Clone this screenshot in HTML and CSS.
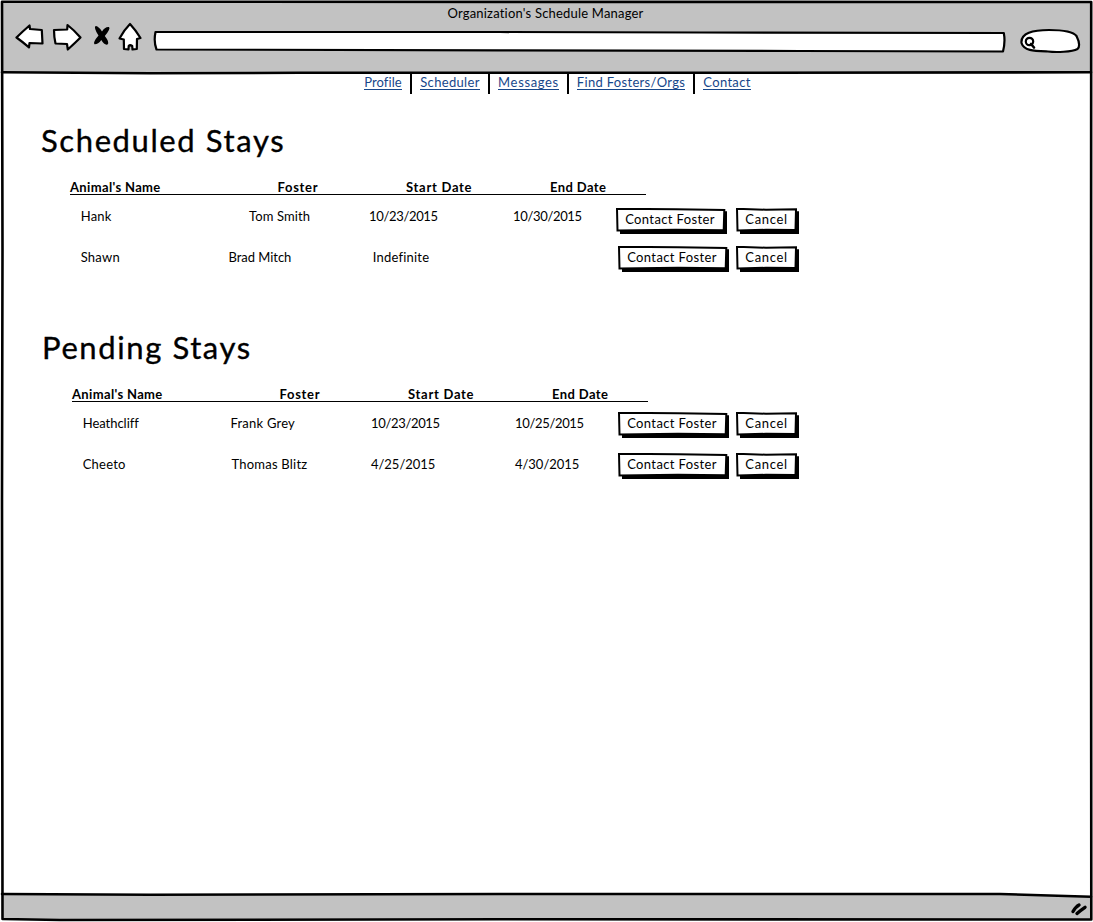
FILE: index.html
```html
<!DOCTYPE html>
<html lang="en">
<head>
<meta charset="utf-8">
<title>Organization's Schedule Manager</title>
<link rel="stylesheet" href="styles.css">
</head>
<body>
<svg width="0" height="0" class="defs" aria-hidden="true">
  <symbol id="btn-wide" viewBox="0 0 111 26">
    <path d="M4 22H108V3.200H111V26H4z"/>
    <path d="M1 .800L60 1.200L108.300 1.900L107.700 22.200L60 21.800L1.500 22.500z" fill="#fff" stroke="#000" stroke-width="2"/>
  </symbol>
  <symbol id="btn-small" viewBox="0 0 63 26">
    <path d="M4 22H60V3.200H63V26H4z"/>
    <path d="M1 .800L30 1.700L60 1.300L59.500 22L30 21.800L1.500 22.500z" fill="#fff" stroke="#000" stroke-width="2"/>
  </symbol>
</svg>
<div class="window">
  <header class="chrome">
    <div class="title">Organization's Schedule Manager</div>
    <div class="toolbar">
      <svg class="i-back" viewBox="15 22 30 32"><path d="M16.500 37.500Q22 32 29.500 25.500L30 29L41.800 30L42.500 43.500L29.500 43L29 47.300Q22 41.500 16.500 37.500z"/></svg>
      <svg class="i-fwd" viewBox="52 22 31 32"><path d="M54 30L67.200 29.500L67.500 25Q74 30 80.500 37.500Q75 43 67.800 49.500L67 44L55.500 43.500Q54 37 54 30z"/></svg>
      <svg class="i-stop" viewBox="92 22 20 32"><path class="solid" d="M95.500 26Q98.500 26 102 31.500Q105 26.500 109 27Q111 28.500 104.800 36Q110 42.500 107.500 44.500Q104.500 45.500 101.300 40Q98 44.500 94.500 44.300Q92.500 42.500 98.500 35.500Q93.500 28 95.500 26z"/></svg>
      <svg class="i-home" viewBox="118 22 25 32"><path d="M130 24Q136 30.500 140.500 38L137 39L136.800 49L132.500 49.500L132.200 46Q130 44.500 128.700 46L128.500 49.500L124 49L123.800 39.500L119.500 38.500Q124 30 130 24z"/></svg>
      <svg class="address" viewBox="152 22 856 32"><path d="M155.500 32L500 32L700 32.500L1003.800 33Q1005.500 42 1003 51.500L800 51L500 50.300L156.500 49.500Q153.500 42 155.500 32z"/></svg>
      <svg class="search" viewBox="1018 22 64 32"><path d="M1021.500 43C1020.500 33 1033 30 1049 30C1064 30 1073.500 32 1076.500 36C1079.500 42 1079.500 47 1077.500 49C1072 52 1056 52.500 1048 51.500C1034 51 1024 51 1021.500 43z"/><circle cx="1029.500" cy="41.500" r="3.700"/><path d="M1031 44L1034 47.500" stroke-width="2.600"/></svg>
    </div>
  </header>
  <nav class="nav">
    <div><a href="#">Profile</a></div>
    <div><a href="#">Scheduler</a></div>
    <div><a href="#" class="wide">Messages</a></div>
    <div><a href="#">Find Fosters/Orgs</a></div>
    <div><a href="#">Contact</a></div>
  </nav>
  <main>
    <section class="stays scheduled">
      <h1>Scheduled Stays</h1>
      <div class="table">
        <div class="head"><span class="tight">Animal's Name</span><span>Foster</span><span>Start Date</span><span class="end">End Date</span></div>
        <div class="row first">
          <span class="name">Hank</span><span class="tom">Tom Smith</span><span class="date">10/23/2015</span><span class="date">10/30/2015</span>
          <button class="btn contact"><svg><use href="#btn-wide"/></svg><b>Contact Foster</b></button>
          <button class="btn cancel"><svg><use href="#btn-small"/></svg><b>Cancel</b></button>
        </div>
        <div class="row second">
          <span class="name">Shawn</span><span class="plain">Brad Mitch</span><span class="open">Indefinite</span><span></span>
          <button class="btn contact"><svg><use href="#btn-wide"/></svg><b>Contact Foster</b></button>
          <button class="btn cancel"><svg><use href="#btn-small"/></svg><b>Cancel</b></button>
        </div>
      </div>
    </section>
    <section class="stays pending">
      <h1>Pending Stays</h1>
      <div class="table">
        <div class="head"><span class="tight">Animal's Name</span><span>Foster</span><span>Start Date</span><span class="end">End Date</span></div>
        <div class="row">
          <span class="name plain">Heathcliff</span><span>Frank Grey</span><span class="date">10/23/2015</span><span class="date">10/25/2015</span>
          <button class="btn contact"><svg><use href="#btn-wide"/></svg><b>Contact Foster</b></button>
          <button class="btn cancel"><svg><use href="#btn-small"/></svg><b>Cancel</b></button>
        </div>
        <div class="row">
          <span class="name">Cheeto</span><span class="thomas">Thomas Blitz</span><span class="plain">4/25/2015</span><span class="plain">4/30/2015</span>
          <button class="btn contact"><svg><use href="#btn-wide"/></svg><b>Contact Foster</b></button>
          <button class="btn cancel"><svg><use href="#btn-small"/></svg><b>Cancel</b></button>
        </div>
      </div>
    </section>
  </main>
  <footer class="status"></footer>
  <svg class="frame" viewBox="0 0 1093 922" aria-hidden="true">
    <path class="gray" d="M2 895L300 895L1000 894.500L1091 897V919H2z"/>
    <path d="M2 1.700L1091.200 2L1091 450L1091.300 919.500L500 919.300L60 920L2.500 919L2 500L2.500 250L2 1.700"/>
    <path d="M2 72.300L150 73.300L300 72.800L700 72.800L1091 72.300"/>
    <path d="M2 894L150 894.800L500 894L1000 894L1091 896.800"/>
    <path class="grip" d="M1073 911.500Q1076 906.500 1079 905M1077 913.500Q1081 910 1085 907.300"/>
  </svg>
</div>
</body>
</html>
```
FILE: styles.css
```css
* { box-sizing: border-box; }
body { margin: 0; background: #fff; font: 13px/18px Lato, "Open Sans", sans-serif; color: #000; }
.defs { position: absolute; }
.window { position: relative; display: flex; flex-direction: column; width: 1093px; height: 922px; overflow: hidden; }

.chrome { height: 74px; margin: 0 1px 0 2px; background: #c2c2c2; clip-path: inset(1px 0 1px 0); }
.title { height: 22px; padding-top: 4px; margin-right: 3px; text-align: center; letter-spacing: .2px; }
.toolbar { display: flex; height: 32px; padding-left: 13px; }
.toolbar svg { height: 32px; flex: none; fill: #fff; stroke: #000; stroke-width: 2.2; stroke-linejoin: round; stroke-linecap: round; }
.toolbar .solid { fill: #000; stroke: none; }
.i-back { width: 30px; margin-right: 7px; }
.i-fwd { width: 31px; margin-right: 9px; }
.i-stop { width: 20px; margin-right: 6px; }
.i-home { width: 25px; margin-right: 9px; }
.address { width: 856px; margin-right: 10px; }
.search { width: 64px; }

.nav { display: grid; grid-template-columns: 56px 78px 79px 126px 64px; height: 20px; padding-left: 356px; }
.nav div { border-right: 2px solid #000; text-align: center; line-height: 14px; padding-top: 1px; white-space: nowrap; }
.nav div:last-child { border-right: 0; }
.nav a { display: inline-block; height: 15px; color: #17478a; text-decoration: none; border-bottom: 1px solid #17478a; letter-spacing: .32px; }
.nav div:first-child a { letter-spacing: .05px; }
.nav a.wide { letter-spacing: .65px; }

main { flex: 1; padding-top: 26px; }
.stays { height: 207px; padding-left: 41px; }
.pending { padding-left: 42px; }
h1 { margin: 0 0 19px; font-size: 31px; line-height: 40px; font-weight: 400; letter-spacing: 1.6px; -webkit-text-stroke: .35px #000; }
.table { margin-left: 29px; }
.pending .table { margin-left: 30px; }
.head { display: grid; grid-template-columns: 207.5px 128.500px 144px 96px; width: 576px; height: 16px; margin-bottom: 1px; border-bottom: 1px solid #000; line-height: 17px; font-weight: 700; letter-spacing: .72px; }
.head .tight { letter-spacing: .35px; }
.head .end { letter-spacing: .4px; }
.row { display: grid; grid-template-columns: 158.500px 140.500px 144px 103px 118px 63px; height: 41px; line-height: 41px; letter-spacing: .22px; white-space: nowrap; }
.scheduled .row { grid-template-columns: 158.500px 140.500px 144px 103px 120px 63px; }
.name { padding-left: 10.7px; }
.tom { padding-left: 20.5px; letter-spacing: .12px; }
.thomas { padding-left: 1px; }
.open { padding-left: 3.7px; }
.row .date { letter-spacing: -.33px; }
.row .plain { letter-spacing: -.03px; }

.btn { display: grid; width: 111px; height: 26px; margin: 9px 0 0; padding: 0; border: 0; background: none; font: inherit; color: inherit; letter-spacing: .38px; line-height: 23px; }
.btn svg, .btn b { grid-area: 1 / 1; }
.btn svg { width: 100%; height: 26px; overflow: visible; }
.btn b { position: relative; padding-right: 3px; font-weight: 400; text-align: center; }
.btn.cancel { width: 63px; letter-spacing: .65px; }
.btn.cancel b { padding-right: 2px; }
.first .btn { margin-top: 12px; }
.second .contact { margin-left: 2px; }

.status { height: 27px; }
.frame { position: absolute; inset: 0; width: 1093px; height: 922px; pointer-events: none; fill: none; stroke: #000; stroke-width: 2.6; stroke-linejoin: round; stroke-linecap: round; }
.frame .gray { fill: #c2c2c2; stroke: none; }
.frame .grip { stroke-width: 3.4; }
```
